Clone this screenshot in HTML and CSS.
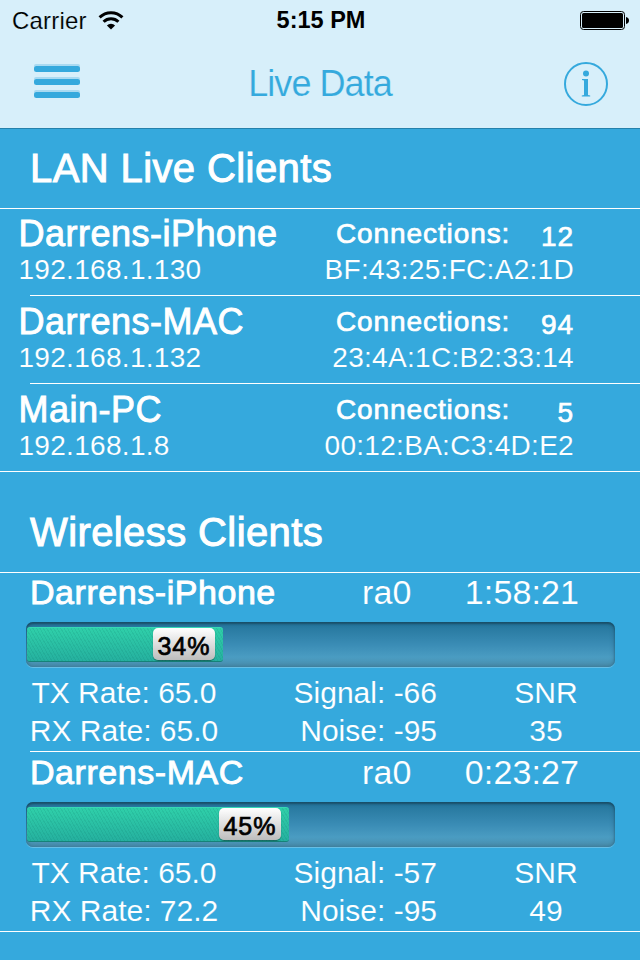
FILE: index.html
```html
<!DOCTYPE html>
<html lang="en">
<head>
  <meta charset="UTF-8">
  <meta name="viewport" content="width=device-width, initial-scale=1.0">
  <title>Live Data</title>
  <link rel="stylesheet" href="styles.css">
</head>
<body>
<header>
  <div class="status-bar">
    <div class="carrier">
      <span>Carrier</span>
      <svg class="wifi" width="26" height="19" viewBox="0 0 26 19">
        <path d="M1.6 6.400a16.200 16.200 0 0 1 22.800 0M5.600 10.800a10.500 10.500 0 0 1 14.800 0" fill="none" stroke="#000" stroke-width="3"/>
        <path d="M13 18.500L8.900 14.400a5.800 5.800 0 0 1 8.200 0z"/>
      </svg>
    </div>
    <div class="clock">5:15 PM</div>
    <svg class="battery" width="50" height="20" viewBox="0 0 50 20">
      <rect x="0.5" y="0.5" width="44" height="18" rx="3" fill="none" stroke="#000"/>
      <rect x="2" y="2" width="41" height="15" rx="1.5"/>
      <path d="M46 6c2 .3 3 1.700 3 3.500s-1 3.200-3 3.500z"/>
    </svg>
  </div>
  <div class="nav-bar">
    <svg class="menu-btn" width="46" height="34" viewBox="0 0 46 34">
      <g fill="#a9daf1">
        <rect y="0" width="46" height="6" rx="2"/>
        <rect y="13" width="46" height="6" rx="2"/>
        <rect y="26" width="46" height="6" rx="2"/>
      </g>
      <g fill="#35a9dd">
        <rect y="2" width="46" height="6" rx="2.500"/>
        <rect y="15" width="46" height="6" rx="2.500"/>
        <rect y="28" width="46" height="6" rx="2.500"/>
      </g>
    </svg>
    <h1>Live Data</h1>
    <svg class="info-btn" width="44" height="44" viewBox="0 0 44 44" fill="#35a9dd">
      <circle cx="22" cy="22" r="21" fill="none" stroke="#35a9dd" stroke-width="2"/>
      <circle cx="22" cy="11.500" r="3"/>
      <path d="M18 17h6v16l2.200.4v1H17.800v-1l2.200-.4V18.400l-2-.4z"/>
    </svg>
  </div>
</header>

<section class="lan">
  <h2>LAN Live Clients</h2>
  <div class="client">
    <div class="client-info">
      <div class="name">Darrens-iPhone</div>
      <div class="address">192.168.1.130</div>
    </div>
    <div class="client-net">
      <div class="connections"><span>Connections:</span><span class="count">12</span></div>
      <div class="address">BF:43:25:FC:A2:1D</div>
    </div>
  </div>
  <div class="client">
    <div class="client-info">
      <div class="name">Darrens-MAC</div>
      <div class="address">192.168.1.132</div>
    </div>
    <div class="client-net">
      <div class="connections"><span>Connections:</span><span class="count">94</span></div>
      <div class="address">23:4A:1C:B2:33:14</div>
    </div>
  </div>
  <div class="client">
    <div class="client-info">
      <div class="name">Main-PC</div>
      <div class="address">192.168.1.8</div>
    </div>
    <div class="client-net">
      <div class="connections"><span>Connections:</span><span class="count">5</span></div>
      <div class="address">00:12:BA:C3:4D:E2</div>
    </div>
  </div>
</section>

<section class="wireless">
  <h2>Wireless Clients</h2>
  <div class="station">
    <div class="station-head">
      <span class="station-name">Darrens-iPhone</span>
      <span class="iface">ra0</span>
      <span class="uptime">1:58:21</span>
    </div>
    <div class="track">
      <div class="fill" style="width: 196px"><span class="percent">34%</span></div>
    </div>
    <div class="stats">
      <div class="rates"><div>TX Rate: 65.0</div><div>RX Rate: 65.0</div></div>
      <div class="levels"><div>Signal: -66</div><div>Noise: -95</div></div>
      <div class="snr"><div>SNR</div><div>35</div></div>
    </div>
  </div>
  <div class="station">
    <div class="station-head">
      <span class="station-name">Darrens-MAC</span>
      <span class="iface">ra0</span>
      <span class="uptime">0:23:27</span>
    </div>
    <div class="track">
      <div class="fill" style="width: 262px"><span class="percent">45%</span></div>
    </div>
    <div class="stats">
      <div class="rates"><div>TX Rate: 65.0</div><div>RX Rate: 72.2</div></div>
      <div class="levels"><div>Signal: -57</div><div>Noise: -95</div></div>
      <div class="snr"><div>SNR</div><div>49</div></div>
    </div>
  </div>
</section>
</body>
</html>
```
FILE: styles.css
```css
* {
  box-sizing: border-box;
}

body {
  background: #35a9dd;
  color: #fff;
  font-family: "Liberation Sans", Arial, sans-serif;
  margin: 0;
  height: 960px;
  overflow: hidden;
}

header {
  background: #d7effa;
  height: 129px;
  border-bottom: 1px solid #2581ab;
}

.status-bar {
  display: grid;
  grid-template-columns: 1fr auto 1fr;
  align-items: center;
  height: 41px;
  padding: 0 10px 0 12px;
  color: #000;
  font-size: 24px;
}

.carrier {
  display: flex;
  align-items: center;
  gap: 11px;
  letter-spacing: 0.2px;
  -webkit-text-stroke: 0.15px #d7effa;
}

.wifi {
  margin-top: -1px;
}

.clock {
  font-weight: bold;
  font-size: 23.5px;
}

.battery {
  justify-self: end;
  margin-top: 1px;
}

.nav-bar {
  display: flex;
  align-items: center;
  justify-content: space-between;
  height: 86px;
  padding: 0 32px 0 34px;
  color: #35a9dd;
}

.menu-btn {
  margin-top: -6px;
}

h1 {
  margin: 0 4px 0 0;
  font-size: 36px;
  font-weight: normal;
  letter-spacing: -0.95px;
  -webkit-text-stroke: 0.2px #d7effa;
}

h2 {
  margin: 0;
  padding-left: 30px;
  font-size: 40px;
  font-weight: normal;
  line-height: 79px;
  letter-spacing: 0.4px;
  border-bottom: 1px solid #fff;
  -webkit-text-stroke: 1px #fff;
}

/* LAN clients */

.client {
  display: flex;
  justify-content: space-between;
  height: 88px;
  padding: 1px 66px 0 18.5px;
  border-bottom: 1px solid #fff;
}

h2 + .client {
  height: 87px;
  padding-top: 0;
}

.client:not(:last-child),
.station:not(:last-child) {
  border-image: linear-gradient(to right, transparent 30px, #fff 30px) 0 0 1 0;
}

.name {
  font-size: 36px;
  line-height: 49px;
  letter-spacing: 0.5px;
  -webkit-text-stroke: 0.9px #fff;
}

.address {
  font-size: 28px;
  line-height: 23px;
  letter-spacing: 0.3px;
  -webkit-text-stroke: 0.12px #35a9dd;
}

.client-net {
  width: 248px;
  display: flex;
  flex-direction: column;
  align-items: flex-end;
  white-space: nowrap;
}

.connections {
  display: flex;
  justify-content: space-between;
  width: 238px;
  height: 49px;
  font-size: 28px;
  line-height: 49px;
  letter-spacing: 0.9px;
  -webkit-text-stroke: 0.7px #fff;
}

.count {
  padding-top: 3px;
}

/* Wireless clients */

.wireless h2 {
  padding-top: 21px;
}

.station {
  height: 180px;
  padding: 1px 25px 0 26px;
  border-bottom: 1px solid #fff;
}

h2 + .station {
  height: 179px;
  padding-top: 0;
}

.station-head {
  display: grid;
  grid-template-columns: 332px 1fr auto;
  padding: 0 36px 0 4px;
  font-size: 34px;
  line-height: 38px;
}

.station-name {
  letter-spacing: 0.55px;
  -webkit-text-stroke: 0.9px #fff;
}

.iface,
.uptime {
  letter-spacing: 0.1px;
  -webkit-text-stroke: 0.12px #35a9dd;
}

.track {
  height: 45px;
  margin-top: 11px;
  padding: 5px 1px;
  border-radius: 7px;
  background: linear-gradient(#23749a, #3a8cb5 50%, #4a9cc2 78%, #4b8fae);
  box-shadow: inset 0 2px 2px rgba(20, 60, 80, 0.6), inset 0 0 5px rgba(20, 60, 80, 0.4), 0 1px 0 rgba(255, 255, 255, 0.25);
}

.fill {
  display: flex;
  align-items: center;
  justify-content: flex-end;
  height: 35px;
  padding-right: 8px;
  border-radius: 3px;
  border-top: 1px solid #36d9b4;
  border-bottom: 1px solid #168278;
  background:
    repeating-linear-gradient(60deg, rgba(0, 90, 80, 0.1) 0 1px, transparent 1px 3px),
    linear-gradient(#2fcfa9, #25b09f);
}

.percent {
  width: 62px;
  height: 32px;
  margin-top: -1px;
  border-radius: 5px;
  background: linear-gradient(#fff, #bdbdbd);
  box-shadow: 0 1px 1px rgba(0, 0, 0, 0.4);
  color: #000;
  font-size: 25px;
  line-height: 36px;
  text-align: center;
  letter-spacing: 1px;
  -webkit-text-stroke: 0.7px #000;
}

.stats {
  display: flex;
  margin-top: 7px;
  font-size: 30px;
  line-height: 38px;
  -webkit-text-stroke: 0.12px #35a9dd;
}

.rates {
  width: 196px;
  text-align: center;
}

.levels {
  width: 215px;
  text-align: right;
}

.snr {
  width: 136px;
  margin-left: 41px;
  text-align: center;
}
```
